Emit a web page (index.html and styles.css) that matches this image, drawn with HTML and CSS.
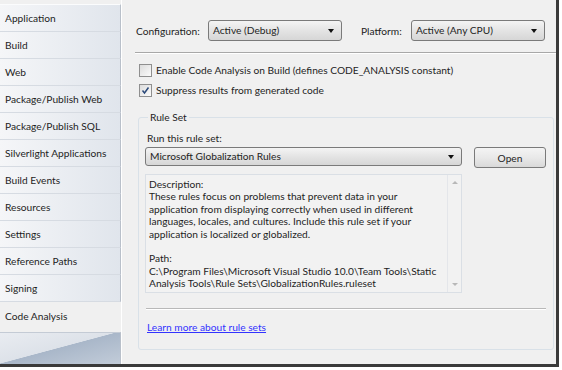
FILE: index.html
```html
<!DOCTYPE html>
<html>
<head>
  <title>Code Analysis</title>
  <link rel="stylesheet" href="styles.css">
</head>
<body>
  <div class="window">
    <div class="sidebar">
      <div class="tab">Application</div>
      <div class="tab">Build</div>
      <div class="tab">Web</div>
      <div class="tab">Package/Publish Web</div>
      <div class="tab">Package/Publish SQL</div>
      <div class="tab">Silverlight Applications</div>
      <div class="tab">Build Events</div>
      <div class="tab">Resources</div>
      <div class="tab">Settings</div>
      <div class="tab">Reference Paths</div>
      <div class="tab">Signing</div>
      <div class="tab selected">Code Analysis</div>
      <div class="sidebar-end"></div>
    </div>

    <div class="main">
      <div class="config-row">
        <span class="label config-label">Configuration:</span>
        <div class="combo config-combo">Active (Debug)<span class="arrow"></span></div>
        <span class="label platform-label">Platform:</span>
        <div class="combo config-combo">Active (Any CPU)<span class="arrow"></span></div>
      </div>
      <div class="rule"></div>

      <div class="check-row">
        <span class="checkbox"></span>
        <span>Enable Code Analysis on Build (defines CODE_ANALYSIS constant)</span>
      </div>
      <div class="check-row">
        <span class="checkbox checked">
          <svg width="9" height="9" viewBox="0 0 9 9"><path d="M1.5 4.5 L3.5 7 L7.5 1.5" fill="none" stroke="#2c4a7a" stroke-width="1.5"/></svg>
        </span>
        <span>Suppress results from generated code</span>
      </div>

      <fieldset class="ruleset">
        <legend>Rule Set</legend>
        <div class="run-label">Run this rule set:</div>
        <div class="rule-row">
          <div class="combo rule-combo">Microsoft Globalization Rules<span class="arrow"></span></div>
          <button class="open-btn">Open</button>
        </div>
        <div class="desc">
          <div class="desc-text">Description:
These rules focus on problems that prevent data in your
application from displaying correctly when used in different
languages, locales, and cultures. Include this rule set if your
application is localized or globalized.

Path:
C:\Program Files\Microsoft Visual Studio 10.0\Team Tools\Static
Analysis Tools\Rule Sets\GlobalizationRules.ruleset</div>
          <div class="scrollbar">
            <span class="sb-up"></span>
            <span class="sb-down"></span>
          </div>
        </div>
        <div class="rule inner-rule"></div>
        <a class="learn" href="#">Learn more about rule sets</a>
      </fieldset>
    </div>
  </div>
</body>
</html>
```

FILE: styles.css
```css
body {
  margin: 0;
  background: #ffffff;
  font-family: Lato, "Open Sans", sans-serif;
  font-size: 10.2px;
  color: #1e1e1e;
}
.window {
  display: flex;
  width: 556px;
  height: 364px;
  background: #f0f0f0;
  border-right: 3px solid #3a3a3a;
  border-bottom: 3px solid #3a3a3a;
  overflow: hidden;
}
.sidebar {
  flex-shrink: 0;
  width: 121px;
  padding-top: 4px;
  display: flex;
  flex-direction: column;
  background: #f0f0f0;
}
.tab {
  height: 26px;
  line-height: 26px;
  padding-left: 5px;
  background: linear-gradient(to right, #f5f6f8, #e0e5ec);
  border-bottom: 1px solid #d6dbe2;
  border-right: 1px solid #b9c0ca;
  white-space: nowrap;
}
.tab:first-child {
  border-top: 1px solid #fbfcfd;
}
.tab.selected {
  background: #f0f0f0;
  border-right-color: #f0f0f0;
  border-bottom: none;
  height: 30px;
  line-height: 28px;
}
.sidebar-end {
  flex: 1;
  border-top: 1px solid #c4cbd5;
  border-right: 1px solid #b9c0ca;
  background: linear-gradient(165deg, #e9ecf1 0%, #dde2e9 48%, #a9b7c9 49%, #c2ccd9 100%);
}
.main {
  flex: 1;
  min-width: 0;
  padding: 20px 0 0 14px;
  border-left: 1px solid #ffffff;
}
.config-row {
  display: flex;
  align-items: center;
  height: 21px;
}
.config-label {
  width: 72px;
}
.platform-label {
  margin-left: 19px;
  width: 50px;
}
.combo {
  position: relative;
  box-sizing: border-box;
  height: 21px;
  line-height: 19px;
  padding-left: 4px;
  border: 1px solid #7a7a7a;
  border-radius: 3px;
  background: linear-gradient(#f4f4f4, #e4e4e4 50%, #d6d6d6);
  white-space: nowrap;
}
.config-combo {
  width: 134px;
}
.arrow {
  position: absolute;
  right: 7px;
  top: 8px;
  border-left: 3.5px solid transparent;
  border-right: 3.5px solid transparent;
  border-top: 4px solid #111;
}
.rule {
  height: 1px;
  background: #a8a8a8;
  border-bottom: 1px solid #ffffff;
  margin: 11px 0 6px -1px;
}
.check-row {
  display: flex;
  align-items: center;
  height: 20px;
  padding-left: 3px;
}
.checkbox {
  box-sizing: border-box;
  width: 13px;
  height: 13px;
  margin-right: 4px;
  border: 1px solid #8f8f8f;
  background: linear-gradient(135deg, #dcdcdc, #fbfbfb);
  display: flex;
  align-items: center;
  justify-content: center;
}
.ruleset {
  margin: 11px 5px 0 2px;
  padding: 9px 7px 10px 6px;
  border: 1px solid #d9e1e8;
  border-radius: 3px;
  height: 239px;
  box-sizing: border-box;
}
.ruleset legend {
  padding: 0 2px;
  margin-left: 3px;
}
.run-label {
  margin-left: 2px;
  margin-bottom: 3px;
}
.rule-row {
  display: flex;
  align-items: flex-start;
}
.rule-combo {
  width: 317px;
  height: 19px;
  line-height: 17px;
}
.rule-combo .arrow {
  top: 7px;
}
.open-btn {
  margin-left: 12px;
  width: 72px;
  height: 21px;
  padding: 0;
  font: inherit;
  color: #1e1e1e;
  border: 1px solid #7a7a7a;
  border-radius: 3px;
  background: linear-gradient(#f4f4f4, #e9e9e9 50%, #d9d9d9);
}
.desc {
  display: flex;
  width: 317px;
  height: 119px;
  margin-top: 6px;
  box-sizing: border-box;
  border: 1px solid #dadfe5;
  background: #f2f2f2;
}
.desc-text {
  flex: 1;
  padding: 3px 0 0 3px;
  line-height: 12.4px;
  white-space: pre;
  overflow: hidden;
}
.scrollbar {
  width: 13px;
  border-left: 1px solid #e4e6ea;
  display: flex;
  flex-direction: column;
  justify-content: space-between;
  align-items: center;
  padding: 6px 0;
}
.sb-up {
  border-left: 3px solid transparent;
  border-right: 3px solid transparent;
  border-bottom: 3px solid #b8b8b8;
}
.sb-down {
  border-left: 3px solid transparent;
  border-right: 3px solid transparent;
  border-top: 3px solid #b8b8b8;
}
.inner-rule {
  margin: 15px 0 11px 1px;
  background: #b8b8b8;
}
.learn {
  margin-left: 2px;
  color: #3333ff;
}
```
